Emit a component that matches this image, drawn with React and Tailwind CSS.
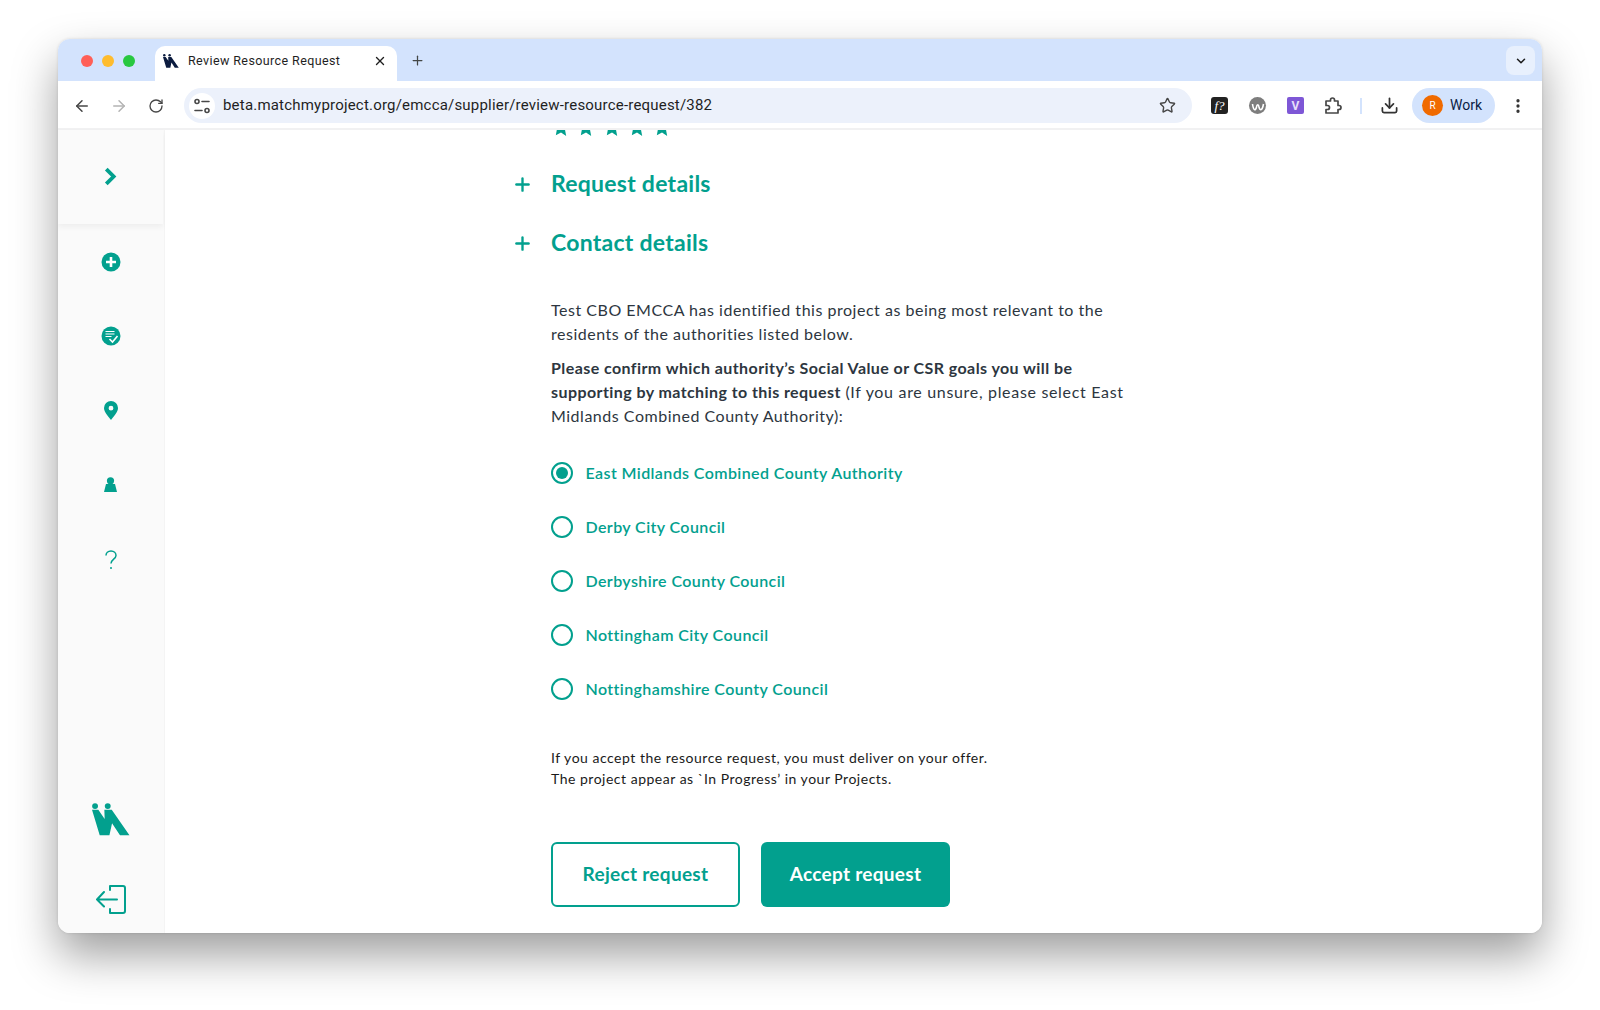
import React from 'react';
import { ArrowLeft, ArrowRight, RotateCw, Star, X, Plus, ChevronDown, Download, MoreVertical } from 'lucide-react';

const authorities = [
  'East Midlands Combined County Authority',
  'Derby City Council',
  'Derbyshire County Council',
  'Nottingham City Council',
  'Nottinghamshire County Council',
];

const Logo = ({ className, color }) => (
  <svg viewBox="0 0 36 31" className={className} fill={color}>
    <circle cx="2.900" cy="2.800" r="2.800" />
    <circle cx="14.900" cy="2.800" r="2.800" />
    <path d="M0 6.300 L6 6.300 L12 15 L11.700 6.300 L18.700 6.300 L35.500 30.500 L26.500 30.500 L19 19 L16.500 30.500 L7.300 30.500 Z" />
  </svg>
);

const ProfileIcon = () => (
  <svg viewBox="0 0 20 20" className="w-5 h-5" fill="none" stroke="#474747" strokeWidth="1.6">
    <circle cx="5" cy="5.5" r="2" />
    <path d="M10 5.500h7M3 14.500h7" strokeLinecap="round" />
    <circle cx="15" cy="14.500" r="2" />
  </svg>
);

const SideIcon = ({ children }) => (
  <div className="h-[74px] flex items-center justify-center">{children}</div>
);

const Radio = ({ label, checked }) => (
  <label className="h-[54px] flex items-center gap-[12.500px]">
    <span className="w-[22px] h-[22px] rounded-full border-2 border-[#02a08e] flex items-center justify-center shrink-0">
      {checked && <span className="w-3 h-3 rounded-full bg-[#02a08e]" />}
    </span>
    <span className="text-[16px] font-semibold text-[#02a08e] tracking-[0.4px]">{label}</span>
  </label>
);

const AccordionRow = ({ title, className }) => (
  <div className={`h-[34px] flex items-center gap-[21px] text-[#02a08e] ${className}`}>
    <span className="w-4 h-4 mt-[2px] flex items-center justify-center">
      <Plus className="w-[21px] h-[21px] shrink-0" strokeWidth={2.700} />
    </span>
    <h2 className="text-[23px] font-bold tracking-[0.25px]">{title}</h2>
  </div>
);

const App = () => {
  return (
    <div className="w-[1600px] h-[1010px] bg-white pt-[39px] pl-[58px] overflow-hidden" style={{ fontFamily: 'Lato, sans-serif' }}>
      <div className="w-[1484px] h-[894px] rounded-[12px] overflow-hidden bg-white flex flex-col shadow-[0_22px_45px_rgba(0,0,0,0.38),0_0_3px_rgba(0,0,0,0.12)]">
        {/* tab strip */}
        <div className="h-[42px] bg-[#d3e3fd] flex items-end shrink-0" style={{ fontFamily: 'Roboto, sans-serif' }}>
          <div className="flex items-center gap-[9px] w-[97px] h-[42px] pl-[22.500px] pt-[2px]">
            <span className="w-3 h-3 rounded-full bg-[#ff5f57]" />
            <span className="w-3 h-3 rounded-full bg-[#febc2e]" />
            <span className="w-3 h-3 rounded-full bg-[#28c840]" />
          </div>
          <div className="w-[242px] h-[35px] bg-white rounded-t-[10px] flex items-center pl-2 pr-[10px] pb-[5px]">
            <Logo className="w-4 h-[14px]" color="#0b1b3f" />
            <span className="ml-[9px] text-[12.500px] text-[#1f1f1f] tracking-[0.4px] flex-1">Review Resource Request</span>
            <X className="w-[14px] h-[14px] text-[#1f1f1f]" strokeWidth={2.400} />
          </div>
          <div className="h-[42px] flex items-center ml-[13px]">
            <Plus className="w-[15px] h-[15px] text-[#444746]" strokeWidth={2} />
          </div>
          <div className="flex-1" />
          <div className="w-[29px] h-[29px] mb-[6px] mr-[7px] bg-[#e8f0fd] rounded-[8px] flex items-center justify-center">
            <ChevronDown className="w-[14px] h-[14px] text-[#1f1f1f]" strokeWidth={2.600} />
          </div>
        </div>

        {/* toolbar */}
        <div className="h-[49px] bg-white border-b-2 border-[#f1f1f2] flex items-center shrink-0 pt-[2px]" style={{ fontFamily: 'Roboto, sans-serif' }}>
          <div className="w-[126px] flex items-center pl-[15px] gap-[19px]">
            <ArrowLeft className="w-[18px] h-[18px] text-[#474747]" strokeWidth={2} />
            <ArrowRight className="w-[18px] h-[18px] text-[#b4b4b4]" strokeWidth={2} />
            <RotateCw className="w-[16px] h-[16px] ml-[1px] text-[#474747]" strokeWidth={2} />
          </div>
          <div className="w-[1008px] h-[35px] rounded-full bg-[#ecf1fb] flex items-center pl-[5px] pr-[16px]">
            <span className="w-[26px] h-[26px] rounded-full bg-white flex items-center justify-center shrink-0">
              <ProfileIcon />
            </span>
            <span className="ml-[8px] flex-1 text-[15px] text-[#1f1f1f] tracking-[0.2px]">beta.matchmyproject.org/emcca/supplier/review-resource-request/382</span>
            <Star className="w-[17px] h-[17px] text-[#474747]" strokeWidth={2} />
          </div>
          <div className="ml-[19px] w-[17px] h-[17px] rounded-[3px] bg-[#222] text-white text-[13px] italic flex items-center justify-center" style={{ fontFamily: '"Liberation Serif", serif' }}>f?</div>
          <div className="ml-[21px] w-[17px] h-[17px] rounded-full bg-[#7d7d7d] flex items-center justify-center">
            <svg viewBox="0 0 16 16" className="w-4 h-4" fill="none" stroke="#fff" strokeWidth="1.600"><path d="M2.500 6c1 7 3 7 4 3 .5-3 2-3 2.500 0 1 4 3.200 4 4.500-3" /></svg>
          </div>
          <div className="ml-[21px] w-[17px] h-[17px] rounded-[2px] bg-[#7e57d6] text-[#e6defa] text-[12px] font-bold flex items-center justify-center">V</div>
          <svg viewBox="0 0 18 18" className="ml-[20px] w-[18px] h-[18px]" fill="none" stroke="#474747" strokeWidth="1.700" strokeLinejoin="round">
            <path d="M2 4h4.500V3a2 2 0 0 1 4 0v1H14v4.500h1a2 2 0 0 1 0 4h-1V16H2v-3.500h1.500a2 2 0 0 0 0-4H2z" />
          </svg>
          <div className="ml-[18px] w-[2px] h-4 bg-[#d3e3fd]" />
          <Download className="ml-[18px] w-[19px] h-[19px] text-[#333]" strokeWidth={2.200} />
          <div className="ml-[13px] w-[83px] h-[35px] rounded-full bg-[#d3e3fd] flex items-center pl-[10px] gap-[7px]">
            <span className="w-[21px] h-[21px] rounded-full bg-[#f06a00] text-white text-[10px] flex items-center justify-center">R</span>
            <span className="text-[14px] text-[#0b1d45]">Work</span>
          </div>
          <MoreVertical className="ml-[14px] w-[18px] h-[18px] text-[#333]" strokeWidth={2.400} />
        </div>

        <div className="flex-1 flex min-h-0">
          {/* sidebar */}
          <aside className="w-[107px] bg-[#fafafa] border-r border-[#f4f4f4] flex flex-col shrink-0 pr-[1px]">
            <div className="h-[94px] flex items-center justify-center shadow-[0_3px_6px_rgba(0,0,0,0.05)] mb-[1px] pb-[2px]">
              <svg viewBox="0 0 12 18" className="w-[13px] h-[19px]" fill="none" stroke="#02a08e" strokeWidth="3.600"><path d="M2 2l7 7-7 7" /></svg>
            </div>
            <div>
              <SideIcon>
                <svg viewBox="0 0 20 20" className="w-5 h-5"><circle cx="10" cy="10" r="9.500" fill="#02a08e" /><path d="M10 5v10M5 10h10" stroke="#fff" strokeWidth="2.600" /></svg>
              </SideIcon>
              <SideIcon>
                <svg viewBox="0 0 20 20" className="w-5 h-5"><circle cx="10" cy="10" r="9.500" fill="#02a08e" /><path d="M4.500 5.500h9M4.500 8h9M4.500 10.500h6" stroke="#fff" strokeWidth="1.200" /><path d="M8.500 13l3 3 5-6" stroke="#fff" strokeWidth="1.600" fill="none" /></svg>
              </SideIcon>
              <SideIcon>
                <svg viewBox="0 0 14 19" className="w-[14px] h-[19px]"><path fillRule="evenodd" d="M7 0a7 7 0 0 1 7 7c0 4-4 8-7 12C4 15 0 11 0 7a7 7 0 0 1 7-7zm0 4.800a2.400 2.400 0 1 0 0 4.800 2.400 2.400 0 0 0 0-4.800z" fill="#02a08e" /></svg>
              </SideIcon>
              <SideIcon>
                <svg viewBox="0 0 13 15" className="w-[13px] h-[15px]"><circle cx="6.500" cy="3.800" r="3.600" fill="#02a08e" /><path d="M2 7h9l2 8H0z" fill="#02a08e" /></svg>
              </SideIcon>
              <SideIcon>
                <svg viewBox="0 0 12 20" className="w-3 h-5 mt-[3px]" fill="none" stroke="#02a08e" strokeWidth="1.500"><path d="M1 5.500C1 3 3 1 6 1s5 2 5 4.500c0 3.500-5 3.800-5 8" /><circle cx="6" cy="18" r="1" fill="#02a08e" stroke="none" /></svg>
              </SideIcon>
            </div>
            <div className="flex-1" />
            <div className="flex justify-center pb-[49px]">
              <Logo className="w-[38px] h-[33px]" color="#02a08e" />
            </div>
            <div className="flex justify-center pb-[19px]">
              <svg viewBox="0 0 30 29" className="w-[30px] h-[29px]" fill="none" stroke="#02a08e" strokeWidth="2" strokeLinecap="round" strokeLinejoin="round">
                <path d="M14 1h13a2 2 0 0 1 2 2v23a2 2 0 0 1-2 2H14v-4M14 1v4M1 14.500h20M8 7l-7 7.500 7 7" />
              </svg>
            </div>
          </aside>

          {/* main column */}
          <main className="flex-1 bg-white overflow-hidden pl-[349px] text-[#2d3640]">
            <div className="flex gap-[7.300px] pl-[38px] -mt-[11px] h-[19px]">
              {[0, 1, 2, 3, 4].map((i) => (
                <svg key={i} viewBox="0 0 24 24" className="w-[18px] h-[18px] shrink-0" fill="#02a08e"><path d="M12 1l3.400 7.300 7.600 1-5.600 5.300 1.500 7.900L12 18l-6.900 3.500 1.500-7.900L1 9.300l7.600-1z" /></svg>
              ))}
            </div>

            <AccordionRow title="Request details" className="mt-[28px]" />
            <AccordionRow title="Contact details" className="mt-[25px]" />

            <div className="pl-[37px] pt-[39px]">
              <p className="text-[16px] leading-[24px] tracking-[0.52px] whitespace-nowrap">
                Test CBO EMCCA has identified this project as being most relevant to the<br />
                residents of the authorities listed below.
              </p>
              <p className="mt-[10px] text-[16px] leading-[24px] tracking-[0.52px] whitespace-nowrap">
                <b className="font-bold tracking-[0.42px]">Please confirm which authority’s Social Value or CSR goals you will be<br />
                supporting by matching to this request</b> <span className="tracking-[0.68px]">(If you are unsure, please select East</span><br />
                Midlands Combined County Authority):
              </p>

              <div className="mt-[18px] flex flex-col">
                {authorities.map((name, i) => (
                  <Radio key={name} label={name} checked={i === 0} />
                ))}
              </div>

              <p className="mt-[31px] text-[14px] leading-[21px] text-[#1a1a1a] tracking-[0.51px] whitespace-nowrap">
                If you accept the resource request, you must deliver on your offer.<br />
                The project appear as `In Progress’ in your Projects.
              </p>

              <div className="mt-[53px] flex gap-[21px]">
                <button className="w-[189px] h-[65px] rounded-[6px] border-2 border-[#02a08e] bg-white text-[#02a08e] text-[19px] font-bold tracking-[0.3px]">Reject request</button>
                <button className="w-[189px] h-[65px] rounded-[6px] bg-[#02a08e] text-white text-[19px] font-bold tracking-[0.3px]">Accept request</button>
              </div>
            </div>
          </main>
        </div>
      </div>
    </div>
  );
};

export default App;
